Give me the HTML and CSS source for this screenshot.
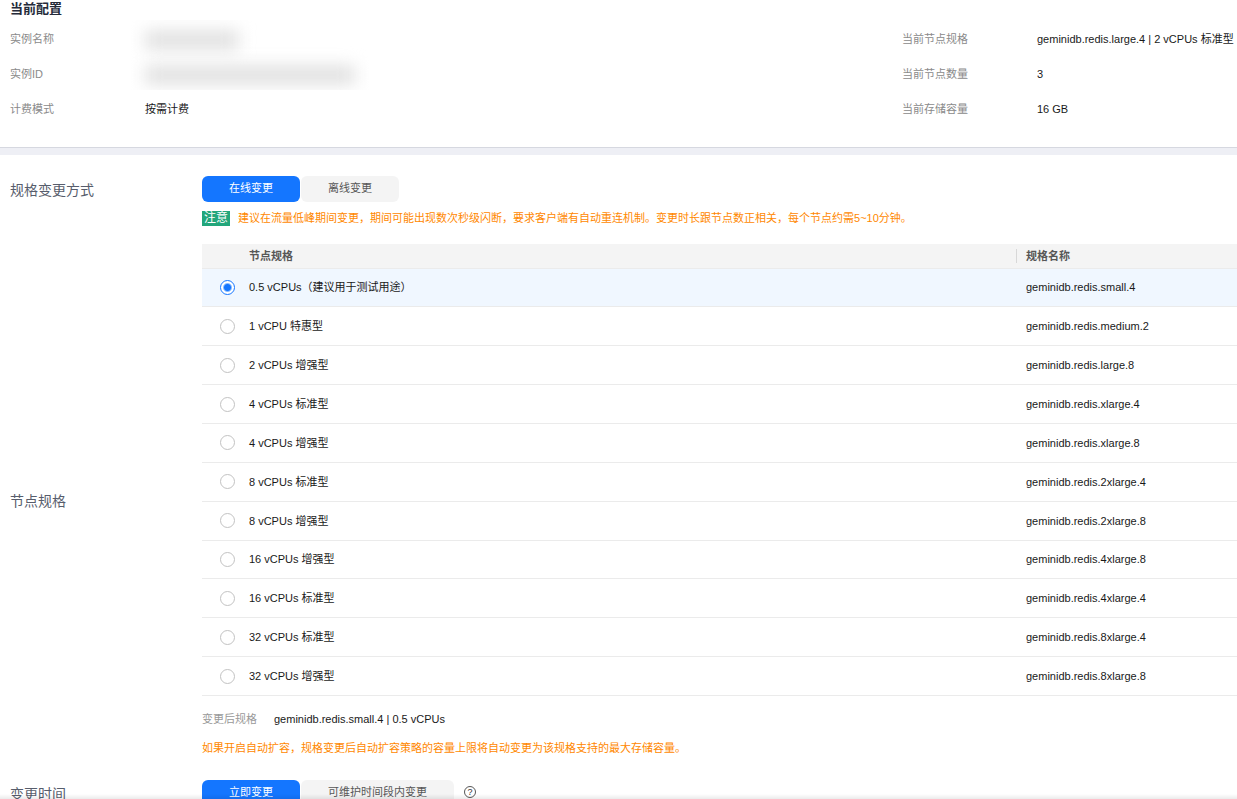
FILE: index.html
```html
<!DOCTYPE html>
<html lang="zh-CN">

<head>
    <meta charset="UTF-8">
    <title>规格变更</title>
    <meta name="viewport" content="width=device-width, initial-scale=1">
    <link rel="stylesheet" href="styles.css">
</head>

<body>
    <section class="config">
        <h2 class="config-title">当前配置</h2>
        <div class="config-body">
            <dl class="config-list config-list-main">
                <dt>实例名称</dt>
                <dt>实例ID</dt>
                <dd class="masked">
                    <span class="mask mask-name"></span>
                    <span class="mask mask-id"></span>
                </dd>
                <dt>计费模式</dt>
                <dd>按需计费</dd>
            </dl>
            <dl class="config-list config-list-side">
                <dt>当前节点规格</dt>
                <dd>geminidb.redis.large.4 | 2 vCPUs 标准型</dd>
                <dt>当前节点数量</dt>
                <dd>3</dd>
                <dt>当前存储容量</dt>
                <dd>16 GB</dd>
            </dl>
        </div>
    </section>

    <form class="form">
        <!-- 规格变更方式 -->
        <div class="form-row">
            <div class="form-label">规格变更方式</div>
            <div class="form-content">
                <div class="segment">
                    <button type="button" class="segment-btn active">在线变更</button>
                    <button type="button" class="segment-btn">离线变更</button>
                </div>
                <p class="notice">
                    <span class="tag">注意</span>
                    <span class="warn">建议在流量低峰期间变更，期间可能出现数次秒级闪断，要求客户端有自动重连机制。变更时长跟节点数正相关，每个节点约需5~10分钟。</span>
                </p>
            </div>
        </div>

        <!-- 节点规格 -->
        <div class="form-row form-row-center">
            <div class="form-label">节点规格</div>
            <div class="form-content">
                <table class="spec-table">
                    <thead>
                        <tr>
                            <th class="col-radio"></th>
                            <th>节点规格</th>
                            <th class="col-name"><span class="th-split">规格名称</span></th>
                        </tr>
                    </thead>
                    <tbody>
                        <tr class="selected">
                            <td class="col-radio"><input type="radio" name="spec" id="spec1" checked></td>
                            <td><label for="spec1">0.5 vCPUs（建议用于测试用途）</label></td>
                            <td class="col-name">geminidb.redis.small.4</td>
                        </tr>
                        <tr>
                            <td class="col-radio"><input type="radio" name="spec" id="spec2"></td>
                            <td><label for="spec2">1 vCPU 特惠型</label></td>
                            <td class="col-name">geminidb.redis.medium.2</td>
                        </tr>
                        <tr>
                            <td class="col-radio"><input type="radio" name="spec" id="spec3"></td>
                            <td><label for="spec3">2 vCPUs 增强型</label></td>
                            <td class="col-name">geminidb.redis.large.8</td>
                        </tr>
                        <tr>
                            <td class="col-radio"><input type="radio" name="spec" id="spec4"></td>
                            <td><label for="spec4">4 vCPUs 标准型</label></td>
                            <td class="col-name">geminidb.redis.xlarge.4</td>
                        </tr>
                        <tr>
                            <td class="col-radio"><input type="radio" name="spec" id="spec5"></td>
                            <td><label for="spec5">4 vCPUs 增强型</label></td>
                            <td class="col-name">geminidb.redis.xlarge.8</td>
                        </tr>
                        <tr>
                            <td class="col-radio"><input type="radio" name="spec" id="spec6"></td>
                            <td><label for="spec6">8 vCPUs 标准型</label></td>
                            <td class="col-name">geminidb.redis.2xlarge.4</td>
                        </tr>
                        <tr>
                            <td class="col-radio"><input type="radio" name="spec" id="spec7"></td>
                            <td><label for="spec7">8 vCPUs 增强型</label></td>
                            <td class="col-name">geminidb.redis.2xlarge.8</td>
                        </tr>
                        <tr>
                            <td class="col-radio"><input type="radio" name="spec" id="spec8"></td>
                            <td><label for="spec8">16 vCPUs 增强型</label></td>
                            <td class="col-name">geminidb.redis.4xlarge.8</td>
                        </tr>
                        <tr>
                            <td class="col-radio"><input type="radio" name="spec" id="spec9"></td>
                            <td><label for="spec9">16 vCPUs 标准型</label></td>
                            <td class="col-name">geminidb.redis.4xlarge.4</td>
                        </tr>
                        <tr>
                            <td class="col-radio"><input type="radio" name="spec" id="spec10"></td>
                            <td><label for="spec10">32 vCPUs 标准型</label></td>
                            <td class="col-name">geminidb.redis.8xlarge.4</td>
                        </tr>
                        <tr>
                            <td class="col-radio"><input type="radio" name="spec" id="spec11"></td>
                            <td><label for="spec11">32 vCPUs 增强型</label></td>
                            <td class="col-name">geminidb.redis.8xlarge.8</td>
                        </tr>
                    </tbody>
                </table>
                <p class="result">
                    <span class="result-label">变更后规格</span>
                    <span>geminidb.redis.small.4 | 0.5 vCPUs</span>
                </p>
                <p class="warn">如果开启自动扩容，规格变更后自动扩容策略的容量上限将自动变更为该规格支持的最大存储容量。</p>
            </div>
        </div>

        <!-- 变更时间 -->
        <div class="form-row">
            <div class="form-label">变更时间</div>
            <div class="form-content">
                <div class="segment">
                    <button type="button" class="segment-btn active">立即变更</button>
                    <button type="button" class="segment-btn">可维护时间段内变更</button>
                    <button type="button" class="help" aria-label="帮助">?</button>
                </div>
            </div>
        </div>
    </form>
    <div class="bottom-shadow"></div>
</body>

</html>
```

FILE: styles.css
```css
* {
    padding: 0;
    margin: 0;
    box-sizing: border-box;
}

body {
    height: 100vh;
    overflow: hidden;
    background: #fff;
    color: #191919;
    font-family: "Liberation Sans", "Noto Sans CJK SC", sans-serif;
    font-size: 11px;
    line-height: 18px;
}

button,
input {
    font: inherit;
}

/* current config */
.config {
    padding-left: 10px;
    padding-bottom: 29px;
    border-bottom: 1px solid #d6d8e0;
}

.config-title {
    font-size: 13px;
    line-height: 18px;
    color: #252b3a;
}

.config-body {
    display: flex;
    padding-top: 12px;
}

.config-list {
    display: grid;
    grid-auto-rows: 18px;
    row-gap: 17px;
}

.config-list-main {
    flex: 1;
    grid-template-columns: 135px 1fr;
}

.config-list-side {
    grid-template-columns: 135px 200px;
}

.config-list dt {
    grid-column: 1;
    color: #8a8a8a;
}

.config-list dd {
    grid-column: 2;
    white-space: nowrap;
}

.config-list .masked {
    grid-row: 1 / 3;
    display: flex;
    flex-direction: column;
    gap: 15px;
    width: 240px;
    height: 70px;
    margin: -10px 0 0 -14px;
    padding: 10px 14px 0;
    overflow: hidden;
}

.mask {
    height: 20px;
    background: #e2e2e2;
    filter: blur(8px);
}

.mask-name {
    width: 94px;
}

.mask-id {
    width: 210px;
}

/* form */
.form {
    border-top: 7px solid #eeeff5;
    padding: 21px 0 0 10px;
}

.form-row {
    display: flex;
    margin-bottom: 17px;
}

.form-row-center {
    align-items: center;
    margin-bottom: 23px;
}

.form-label {
    width: 192px;
    font-size: 14px;
    line-height: 28px;
    color: #575d6c;
}

.form-content {
    flex: 1;
}

.segment {
    display: flex;
    align-items: center;
    gap: 1px;
}

.segment-btn {
    height: 26px;
    padding: 0 27px 2px;
    border: 0;
    border-radius: 6px;
    background: #f4f4f4;
    color: #575757;
}

.segment-btn.active {
    background: #1476ff;
    color: #fff;
}

.help {
    width: 12px;
    height: 12px;
    margin: 0 0 2px 9px;
    border: 1px solid #575757;
    border-radius: 50%;
    background: none;
    color: #333;
    font-size: 9px;
    line-height: 10px;
}

.notice {
    display: flex;
    align-items: center;
    gap: 8px;
    margin-top: 7px;
}

.tag {
    height: 15px;
    padding: 0 2px;
    background: #22a67b;
    color: #fff;
    font-size: 12px;
    line-height: 14px;
}

.warn {
    color: #ff8800;
}

/* spec table */
.spec-table {
    width: 100%;
    height: 452px;
    table-layout: fixed;
    border-collapse: collapse;
    text-align: left;
}

.spec-table th {
    height: 24px;
    background: #f4f4f4;
    border-bottom: 1px solid #ebebeb;
    color: #575757;
}

.spec-table td {
    border-bottom: 1px solid #ebebeb;
}

.spec-table .col-radio {
    width: 47px;
    padding-left: 18px;
}

.spec-table .col-name {
    width: 221px;
}

.spec-table td.col-name {
    padding-left: 10px;
}

.th-split {
    display: block;
    padding-left: 9px;
    border-left: 1px solid #d8d8d8;
    line-height: 14px;
}

.spec-table .selected td {
    background: #f0f7ff;
}

.spec-table input {
    display: block;
    width: 15px;
    height: 15px;
    appearance: none;
    border: 1px solid #c2c2c2;
    border-radius: 50%;
    background: #fff;
}

.spec-table input:checked {
    border-color: #1476ff;
    background: radial-gradient(circle, #1476ff 3px, #fff 5px);
}

.result {
    display: flex;
    gap: 17px;
    margin: 14px 0 11px;
}

.result-label {
    color: #999;
}

/* shadow of the bar pinned below */
.bottom-shadow {
    position: fixed;
    left: 0;
    right: 0;
    bottom: 0;
    height: 5px;
    background: linear-gradient(rgba(0, 0, 0, 0), rgba(0, 0, 0, 0.08));
}
```
